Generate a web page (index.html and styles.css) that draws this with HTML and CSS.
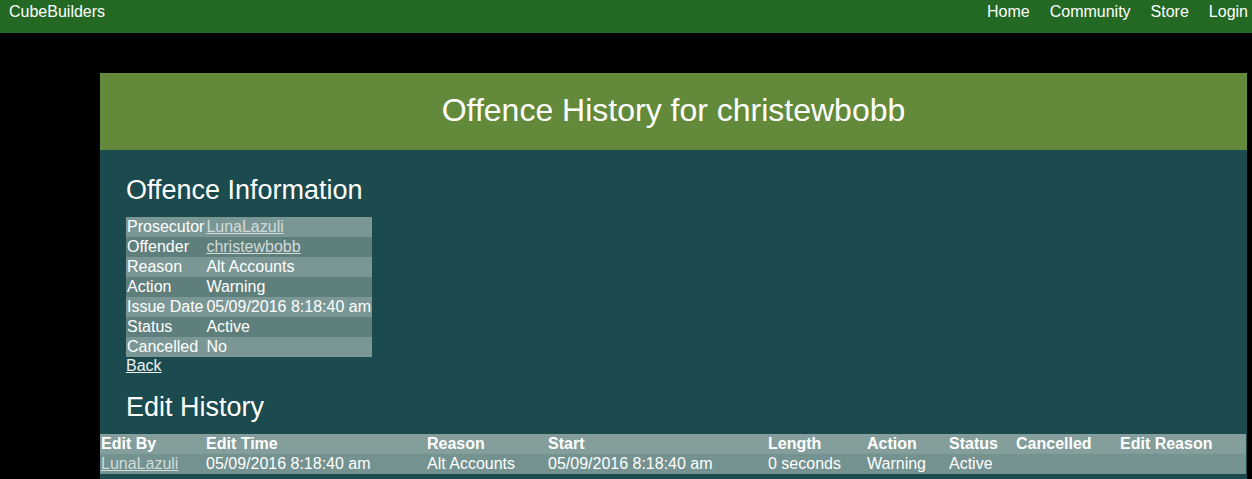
FILE: index.html
```html
<!DOCTYPE html>
<html lang="en">
<head>
<meta charset="utf-8">
<title>Offence History for christewbobb</title>
<link rel="stylesheet" href="styles.css">
</head>
<body>
<nav class="navbar">
  <a class="brand" href="#">CubeBuilders</a>
  <div class="nav-links">
    <a href="#">Home</a>
    <a href="#">Community</a>
    <a href="#">Store</a>
    <a href="#">Login</a>
  </div>
</nav>
<main class="panel">
  <header class="panel-header">
    <h1>Offence History for christewbobb</h1>
  </header>
  <div class="panel-body">
    <section class="info">
      <h2>Offence Information</h2>
      <table class="info-table">
        <tr><td>Prosecutor</td><td><a class="dim-link" href="#">LunaLazuli</a></td></tr>
        <tr><td>Offender</td><td><a class="dim-link" href="#">christewbobb</a></td></tr>
        <tr><td>Reason</td><td>Alt Accounts</td></tr>
        <tr><td>Action</td><td>Warning</td></tr>
        <tr><td>Issue Date</td><td>05/09/2016 8:18:40 am</td></tr>
        <tr><td>Status</td><td>Active</td></tr>
        <tr><td>Cancelled</td><td>No</td></tr>
      </table>
      <a class="back-link" href="#">Back</a>
      <h2>Edit History</h2>
    </section>
    <table class="history-table">
      <thead>
        <tr>
          <th class="c1">Edit By</th>
          <th class="c2">Edit Time</th>
          <th class="c3">Reason</th>
          <th class="c4">Start</th>
          <th class="c5">Length</th>
          <th class="c6">Action</th>
          <th class="c7">Status</th>
          <th class="c8">Cancelled</th>
          <th class="c9">Edit Reason</th>
        </tr>
      </thead>
      <tbody>
        <tr>
          <td><a class="dim-link" href="#">LunaLazuli</a></td>
          <td>05/09/2016 8:18:40 am</td>
          <td>Alt Accounts</td>
          <td>05/09/2016 8:18:40 am</td>
          <td>0 seconds</td>
          <td>Warning</td>
          <td>Active</td>
          <td></td>
          <td></td>
        </tr>
      </tbody>
    </table>
  </div>
</main>
</body>
</html>
```
FILE: styles.css
```css
html, body {
  margin: 0;
  padding: 0;
}

body {
  background: #000000;
  color: #ffffff;
  font-family: "Liberation Sans", Arial, sans-serif;
  font-size: 16px;
}

a {
  color: #ffffff;
}

.navbar {
  height: 33px;
  box-sizing: border-box;
  padding: 3px 4px 0 9px;
  background: #236823;
  display: flex;
  justify-content: space-between;
  align-items: flex-start;
}

.navbar a {
  color: #ffffff;
  text-decoration: none;
}

.nav-links {
  display: flex;
  gap: 20px;
}

.panel {
  margin: 40px 0 0 100px;
  width: 1147px;
}

.panel-header {
  background: #638a3b;
  height: 77px;
  box-sizing: border-box;
  padding-top: 19px;
  text-align: center;
}

.panel-header h1 {
  margin: 0;
  font-size: 32px;
  font-weight: normal;
}

.panel-body {
  background: #1b4b4e;
  padding: 8px 0 6px 0;
}

.info {
  padding-left: 26px;
}

.info h2 {
  margin: 17px 0 11px 0;
  font-size: 27px;
  font-weight: normal;
}

.info-table {
  border-spacing: 0;
  border-collapse: collapse;
}

.info-table td {
  padding: 1px;
  white-space: nowrap;
}

.info-table tr:nth-child(odd) {
  background: #7a9795;
}

.info-table tr:nth-child(even) {
  background: #5f7f7d;
}

.dim-link {
  color: #d2dbda;
}

.back-link {
  color: #eef2f2;
}

.history-table {
  width: 1146px;
  border-collapse: collapse;
  table-layout: fixed;
}

.history-table th,
.history-table td {
  padding: 1px;
  text-align: left;
  white-space: nowrap;
}

.history-table thead tr {
  background: #849e9c;
}

.history-table tbody tr {
  background: #739290;
}

.history-table th {
  font-weight: bold;
}

.c1 { width: 103px; }
.c2 { width: 219px; }
.c3 { width: 119px; }
.c4 { width: 218px; }
.c5 { width: 97px; }
.c6 { width: 80px; }
.c7 { width: 65px; }
.c8 { width: 102px; }
.c9 { width: auto; }
```
